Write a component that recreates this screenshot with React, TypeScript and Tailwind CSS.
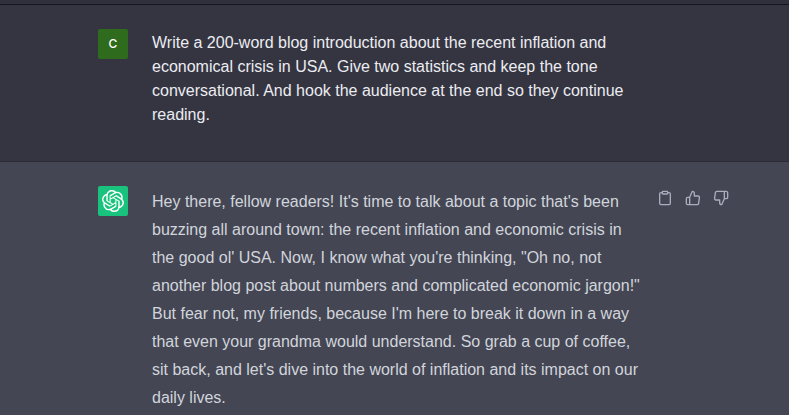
import type { ReactNode } from 'react'
import { FiClipboard, FiThumbsDown, FiThumbsUp } from 'react-icons/fi'
import { SiOpenai } from 'react-icons/si'

const prompt = [
  'Write a 200-word blog introduction about the recent inflation and',
  'economical crisis in USA. Give two statistics and keep the tone',
  'conversational. And hook the audience at the end so they continue',
  'reading.',
]

const answer = [
  "Hey there, fellow readers! It's time to talk about a topic that's been",
  'buzzing all around town: the recent inflation and economic crisis in',
  "the good ol' USA. Now, I know what you're thinking, \"Oh no, not",
  'another blog post about numbers and complicated economic jargon!"',
  "But fear not, my friends, because I'm here to break it down in a way",
  'that even your grandma would understand. So grab a cup of coffee,',
  "sit back, and let's dive into the world of inflation and its impact on our",
  'daily lives.',
]

function Lines({ lines }: { lines: string[] }) {
  return (
    <>
      {lines.map(line => (
        <span key={line} className="block whitespace-nowrap">{line}</span>
      ))}
    </>
  )
}

function IconButton({ label, children }: { label: string, children: ReactNode }) {
  return (
    <button type="button" aria-label={label} className="rounded-md p-1 hover:text-gray-200">
      {children}
    </button>
  )
}

function UserMessage() {
  return (
    <article className="flex gap-6 border-b border-[#2b2c36] bg-[#343541] pt-6 pr-14 pb-8 pl-[98px]">
      <div className="flex size-[30px] shrink-0 items-center justify-center rounded-xs bg-[#2f6b1c] font-['Inter',sans-serif] text-xs font-medium text-white">
        C
      </div>
      <p className="min-w-0 flex-1 pt-0.5 pb-0.5 text-base leading-6 text-[#ececf1]">
        <Lines lines={prompt} />
      </p>
    </article>
  )
}

function AssistantMessage() {
  return (
    <article className="flex grow bg-[#444654] pt-6 pr-14 pl-[98px]">
      <div className="mr-6 flex size-[30px] shrink-0 items-center justify-center rounded-xs bg-[#19c37d] text-white">
        <SiOpenai size={22} />
      </div>
      <p className="min-w-0 flex-1 pt-0.5 text-base leading-7 text-[#d1d5db]">
        <Lines lines={answer} />
      </p>
      <div className="flex shrink-0 gap-1 self-start text-[#acacbe]">
        <IconButton label="Copy"><FiClipboard size={16} /></IconButton>
        <IconButton label="Good response"><FiThumbsUp size={16} /></IconButton>
        <IconButton label="Bad response"><FiThumbsDown size={16} /></IconButton>
      </div>
    </article>
  )
}

export default function App() {
  return (
    <main className="flex min-h-screen flex-col bg-[#444654] font-['Liberation_Sans',Arial,sans-serif]">
      <div className="h-[5px] border-b border-[#15151d] bg-[#2f303b]" />
      <UserMessage />
      <AssistantMessage />
    </main>
  )
}
